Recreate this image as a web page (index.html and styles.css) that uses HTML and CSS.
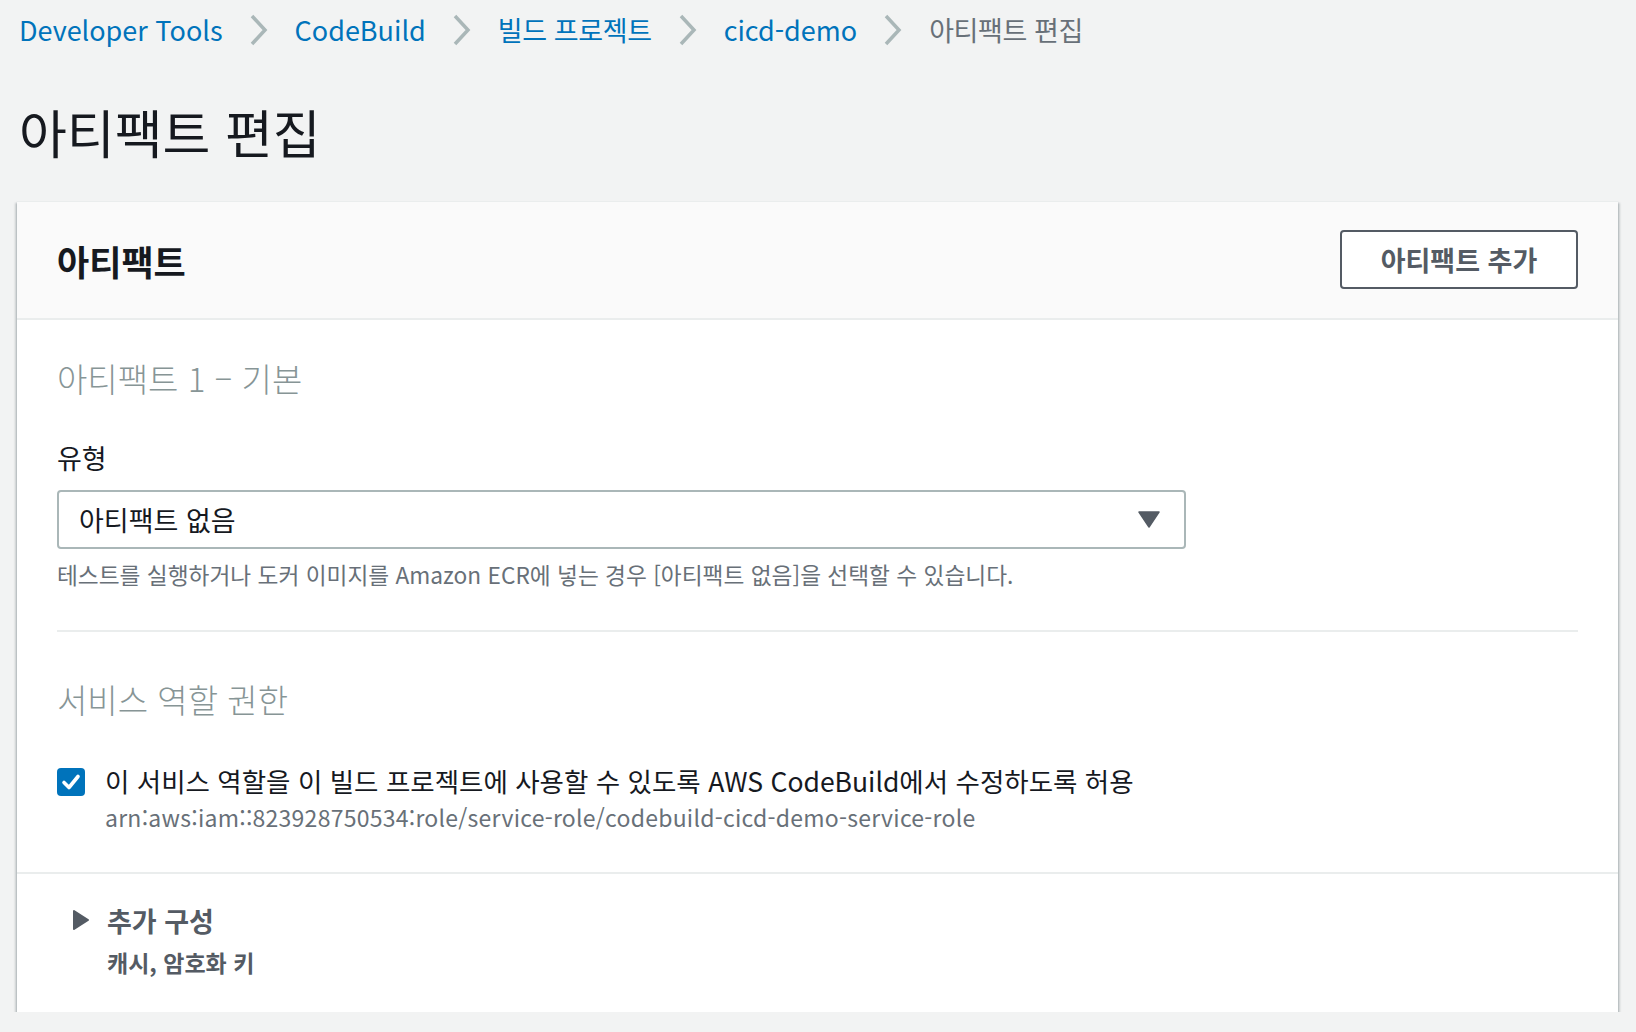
FILE: index.html
```html
<!DOCTYPE html>
<html lang="ko">
<head>
<meta charset="utf-8">
<title>아티팩트 편집</title>
<link rel="stylesheet" href="styles.css">
</head>
<body>
<div class="page">
  <nav class="breadcrumb">
    <a class="crumb" href="#">Developer Tools</a>
    <svg class="chev" width="20" height="32" viewBox="0 0 20 32"><polyline points="3,2 16,16 3,30" fill="none" stroke="#aab7b8" stroke-width="3.5"/></svg>
    <a class="crumb" href="#">CodeBuild</a>
    <svg class="chev" width="20" height="32" viewBox="0 0 20 32"><polyline points="3,2 16,16 3,30" fill="none" stroke="#aab7b8" stroke-width="3.5"/></svg>
    <a class="crumb ko" href="#">빌드 프로젝트</a>
    <svg class="chev" width="20" height="32" viewBox="0 0 20 32"><polyline points="3,2 16,16 3,30" fill="none" stroke="#aab7b8" stroke-width="3.5"/></svg>
    <a class="crumb" href="#">cicd-demo</a>
    <svg class="chev" width="20" height="32" viewBox="0 0 20 32"><polyline points="3,2 16,16 3,30" fill="none" stroke="#aab7b8" stroke-width="3.5"/></svg>
    <span class="crumb ko current">아티팩트 편집</span>
  </nav>

  <h1 class="title">아티팩트 편집</h1>

  <section class="panel">
    <header class="panel-head">
      <h2 class="panel-title">아티팩트</h2>
      <button class="btn">아티팩트 추가</button>
    </header>

    <div class="panel-body">
      <h3 class="sub">아티팩트 1 – 기본</h3>

      <div class="field-label">유형</div>
      <div class="select">
        <span>아티팩트 없음</span>
        <svg class="caret" width="22" height="17" viewBox="0 0 22 17"><polygon points="1,1 21,1 11,16" fill="#545b64" stroke="#545b64" stroke-width="1.5" stroke-linejoin="round"/></svg>
      </div>
      <div class="hint">테스트를 실행하거나 도커 이미지를 Amazon ECR에 넣는 경우 [아티팩트 없음]을 선택할 수 있습니다.</div>

      <div class="divider"></div>

      <h3 class="sub sub2">서비스 역할 권한</h3>

      <div class="check-row">
        <span class="checkbox">
          <svg width="28" height="28" viewBox="0 0 28 28"><polyline points="7,14.5 12,19.5 21,8.5" fill="none" stroke="#fff" stroke-width="3.6" stroke-linecap="round" stroke-linejoin="round"/></svg>
        </span>
        <div class="check-text">
          <div class="check-label">이 서비스 역할을 이 빌드 프로젝트에 사용할 수 있도록 AWS CodeBuild에서 수정하도록 허용</div>
          <div class="check-desc">arn:aws:iam::823928750534:role/service-role/codebuild-cicd-demo-service-role</div>
        </div>
      </div>
    </div>

    <div class="panel-foot">
      <div class="expander">
        <svg class="tri" width="18" height="22" viewBox="0 0 18 22"><polygon points="2,2 16,11 2,20" fill="#545b64" stroke="#545b64" stroke-width="2" stroke-linejoin="round"/></svg>
        <span class="exp-title">추가 구성</span>
      </div>
      <div class="exp-desc">캐시, 암호화 키</div>
    </div>
  </section>
</div>
</body>
</html>
```

FILE: styles.css
```css
html, body {
  margin: 0;
  padding: 0;
}

body {
  background: #f2f3f3;
  font-family: "Noto Sans CJK KR", "Noto Sans", sans-serif;
  color: #16191f;
}

.page {
  padding: 0 18px 0 17px;
}

.breadcrumb {
  display: flex;
  align-items: center;
  height: 60px;
  padding-left: 2px;
  gap: 26px;
}

.crumb {
  font-size: 27px;
  line-height: 36px;
  color: #0073bb;
  text-decoration: none;
}

.crumb.ko {
  letter-spacing: -0.4px;
}

.crumb.current {
  color: #687078;
}

.chev {
  display: block;
  flex: none;
}

.title {
  margin: 42px 0 0 2px;
  font-size: 52px;
  line-height: 60px;
  font-weight: 400;
  color: #16191f;
}

.panel {
  margin-top: 39px;
  background: #fff;
  border-top: 1px solid #eaeded;
  box-shadow: 0 2px 2px 0 rgba(0, 28, 36, 0.3), 2px 2px 2px 0 rgba(0, 28, 36, 0.15), -2px 2px 2px 0 rgba(0, 28, 36, 0.15);
}

.panel-head {
  height: 116px;
  display: flex;
  align-items: center;
  justify-content: space-between;
  padding: 0 40px;
  background: #fafafa;
  border-bottom: 2px solid #eaeded;
}

.panel-title {
  margin: 0;
  font-size: 35px;
  font-weight: 700;
  color: #16191f;
}

.btn {
  width: 238px;
  height: 59px;
  background: #fff;
  border: 2px solid #545b64;
  border-radius: 4px;
  font-family: inherit;
  font-size: 27px;
  font-weight: 700;
  color: #545b64;
  padding: 0;
  margin-top: -2px;
}

.panel-body {
  padding: 36px 40px 39px;
}

.sub {
  margin: 0;
  font-size: 33px;
  line-height: 44px;
  font-weight: 300;
  color: #879596;
}

.field-label {
  margin-top: 38px;
  font-size: 27px;
  line-height: 40px;
  color: #16191f;
}

.select {
  margin-top: 12px;
  width: 1129px;
  height: 59px;
  box-sizing: border-box;
  border: 2px solid #aab7b8;
  border-radius: 4px;
  display: flex;
  align-items: center;
  justify-content: space-between;
  padding: 0 24px 0 20px;
  font-size: 27px;
  color: #16191f;
}

.caret {
  display: block;
}

.hint {
  margin-top: 10px;
  font-size: 22.7px;
  line-height: 32px;
  color: #687078;
}

.divider {
  margin-top: 39px;
  height: 2px;
  background: #eaeded;
}

.sub2 {
  margin-top: 45px;
}

.check-row {
  margin-top: 40px;
  display: flex;
  align-items: flex-start;
  gap: 20px;
}

.checkbox {
  flex: none;
  width: 28px;
  height: 28px;
  margin-top: 7px;
  border-radius: 4px;
  background: #0073bb;
  display: flex;
}

.check-label {
  font-size: 26.5px;
  line-height: 40px;
  color: #16191f;
}

.check-desc {
  font-size: 23px;
  line-height: 32px;
  letter-spacing: 0.25px;
  color: #687078;
}

.panel-foot {
  border-top: 2px solid #eaeded;
  padding: 26px 40px 34px 55px;
}

.expander {
  display: flex;
  align-items: center;
  gap: 17px;
  height: 40px;
}

.tri {
  display: block;
}

.exp-title {
  font-size: 27px;
  font-weight: 700;
  color: #545b64;
}

.exp-desc {
  margin-top: 6px;
  padding-left: 35px;
  font-size: 23px;
  line-height: 32px;
  font-weight: 700;
  color: #545b64;
}
```
